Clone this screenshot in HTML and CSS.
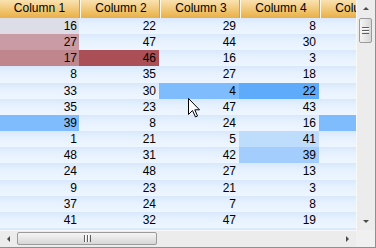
FILE: index.html
```html
<!DOCTYPE html>
<html lang="en">
<head>
    <meta charset="UTF-8">
    <title>Grid</title>
    <link rel="stylesheet" href="styles.css">
</head>
<body>

<div class="grid-view">
    <div class="table-area">
        <div class="header">
            <div class="hcell c1">Column 1</div>
            <div class="hcell">Column 2</div>
            <div class="hcell">Column 3</div>
            <div class="hcell">Column 4</div>
            <div class="hcell">Column 5</div>
        </div>
        <div class="row"><div class="cell c1 h-grey">16</div><div class="cell">22</div><div class="cell">29</div><div class="cell">8</div><div class="cell"></div></div>
        <div class="row"><div class="cell c1 h-rose">27</div><div class="cell">47</div><div class="cell">44</div><div class="cell">30</div><div class="cell"></div></div>
        <div class="row"><div class="cell c1 h-rose2">17</div><div class="cell h-red">46</div><div class="cell">16</div><div class="cell">3</div><div class="cell"></div></div>
        <div class="row"><div class="cell c1">8</div><div class="cell">35</div><div class="cell">27</div><div class="cell">18</div><div class="cell"></div></div>
        <div class="row"><div class="cell c1">33</div><div class="cell">30</div><div class="cell h-blue">4</div><div class="cell h-blue2">22</div><div class="cell"></div></div>
        <div class="row"><div class="cell c1">35</div><div class="cell">23</div><div class="cell">47</div><div class="cell">43</div><div class="cell"></div></div>
        <div class="row"><div class="cell c1 h-blue">39</div><div class="cell">8</div><div class="cell">24</div><div class="cell">16</div><div class="cell h-blue"></div></div>
        <div class="row"><div class="cell c1">1</div><div class="cell">21</div><div class="cell">5</div><div class="cell h-pale">41</div><div class="cell"></div></div>
        <div class="row"><div class="cell c1">48</div><div class="cell">31</div><div class="cell">42</div><div class="cell h-sky">39</div><div class="cell"></div></div>
        <div class="row"><div class="cell c1">24</div><div class="cell">48</div><div class="cell">27</div><div class="cell">13</div><div class="cell"></div></div>
        <div class="row"><div class="cell c1">9</div><div class="cell">23</div><div class="cell">21</div><div class="cell">3</div><div class="cell"></div></div>
        <div class="row"><div class="cell c1">37</div><div class="cell">24</div><div class="cell">7</div><div class="cell">8</div><div class="cell"></div></div>
        <div class="row"><div class="cell c1">41</div><div class="cell">32</div><div class="cell">47</div><div class="cell">19</div><div class="cell"></div></div>
        <div class="row"><div class="cell c1"></div><div class="cell"></div><div class="cell"></div><div class="cell"></div><div class="cell"></div></div>
    </div>

    <div class="vscroll">
        <div class="arrow"><span class="tri-up"></span></div>
        <div class="track">
            <div class="thumb-v"><span class="grip-v"></span></div>
        </div>
        <div class="arrow"><span class="tri-down"></span></div>
    </div>

    <div class="hscroll">
        <div class="arrow"><span class="tri-left"></span></div>
        <div class="track">
            <div class="thumb-h"><span class="grip-h"></span></div>
        </div>
        <div class="arrow"><span class="tri-right"></span></div>
    </div>

    <div class="corner"></div>

    <!-- mouse pointer over the grid -->
    <svg class="pointer" width="13" height="20" viewBox="0 0 13 20">
        <path d="M0.5 0.5 L0.5 16.5 L4.5 12.5 L7.5 19 L9.5 18 L6.8 11.8 L11.5 11.8 Z" fill="#fff" stroke="#000" stroke-width="1"/>
    </svg>
</div>

</body>
</html>
```

FILE: styles.css
```css
body {
    margin: 0;
    width: 376px;
    height: 248px;
    overflow: hidden;
    font-family: "Liberation Sans", Arial, sans-serif;
    font-size: 12px;
    color: #000;
}

.grid-view {
    position: relative;
    width: 375px;
    height: 247px;
    display: grid;
    grid-template-columns: 356px 19px;
    grid-template-rows: 230px 17px;
    border-right: 1px solid #8e8f8f;
    border-bottom: 1px solid #8e8f8f;
    background: #f0f0f0;
}

.table-area {
    overflow: hidden;
    background: #eef6ff;
}

.header {
    display: flex;
    height: 18px;
}

.hcell {
    flex: none;
    width: 80px;
    line-height: 17px;
    text-align: center;
    white-space: nowrap;
    background: linear-gradient(#f9e2b0, #f4d08c 35%, #eebf62 70%, #e8b04a);
    box-shadow: inset -1px 0 #fff8ea, inset -2px 0 #d8a043;
}

.row {
    display: flex;
    height: 16.17px;
}

.cell {
    flex: none;
    width: 80px;
    box-sizing: border-box;
    padding-right: 3px;
    line-height: 16px;
    text-align: right;
    background: linear-gradient(#d8e8fb, #e6f1fe 40%, #eef6ff);
}

.c1 {
    width: 79px;
    padding-right: 2px;
}

/* highlighted cells */
.h-grey { background: #dcdde6; }
.h-rose { background: #c99ba4; }
.h-rose2 { background: #c0868e; }
.h-red { background: #a94f55; }
.h-blue { background: #7ebcfd; }
.h-blue2 { background: #5eaafb; }
.h-pale { background: #bedcfc; }
.h-sky { background: #a2cdfc; }

/* scrollbars */
.vscroll {
    display: flex;
    flex-direction: column;
    background: #ececec;
    box-shadow: inset 1px 0 #f8f8f8;
}

.hscroll {
    display: flex;
    background: #ececec;
    box-shadow: inset 0 1px #f8f8f8;
}

.arrow {
    flex: none;
    width: 17px;
    height: 17px;
    display: flex;
    align-items: center;
    justify-content: center;
}

.vscroll .arrow {
    width: 19px;
}

.track {
    flex: 1;
    display: flex;
}

.vscroll .track {
    flex-direction: column;
    align-items: center;
}

.thumb-v {
    margin-top: 1px;
    width: 11px;
    height: 23px;
    border: 1px solid #9b9b9b;
    border-radius: 2px;
    background: linear-gradient(to right, #f4f4f4, #e6e6e6 50%, #d6d6d6);
    display: flex;
    align-items: center;
    justify-content: center;
}

.thumb-h {
    margin-top: 2px;
    width: 138px;
    height: 11px;
    border: 1px solid #9b9b9b;
    border-radius: 2px;
    background: linear-gradient(#f4f4f4, #e6e6e6 50%, #d6d6d6);
    display: flex;
    align-items: center;
    justify-content: center;
}

.grip-v {
    width: 7px;
    height: 7px;
    background: repeating-linear-gradient(#5f5f5f 0 1px, #fdfdfd 1px 2px, transparent 2px 3px);
}

.grip-h {
    width: 7px;
    height: 7px;
    background: repeating-linear-gradient(to right, #5f5f5f 0 1px, #fdfdfd 1px 2px, transparent 2px 3px);
}

.tri-up {
    border-left: 3px solid transparent;
    border-right: 3px solid transparent;
    border-bottom: 3px solid #4a4a4a;
}

.tri-down {
    border-left: 3px solid transparent;
    border-right: 3px solid transparent;
    border-top: 3px solid #4a4a4a;
}

.tri-left {
    border-top: 3px solid transparent;
    border-bottom: 3px solid transparent;
    border-right: 3px solid #4a4a4a;
}

.tri-right {
    border-top: 3px solid transparent;
    border-bottom: 3px solid transparent;
    border-left: 3px solid #4a4a4a;
}

.corner {
    background: #f0f0f0;
}

.pointer {
    position: absolute;
    left: 188px;
    top: 98px;
}
```
